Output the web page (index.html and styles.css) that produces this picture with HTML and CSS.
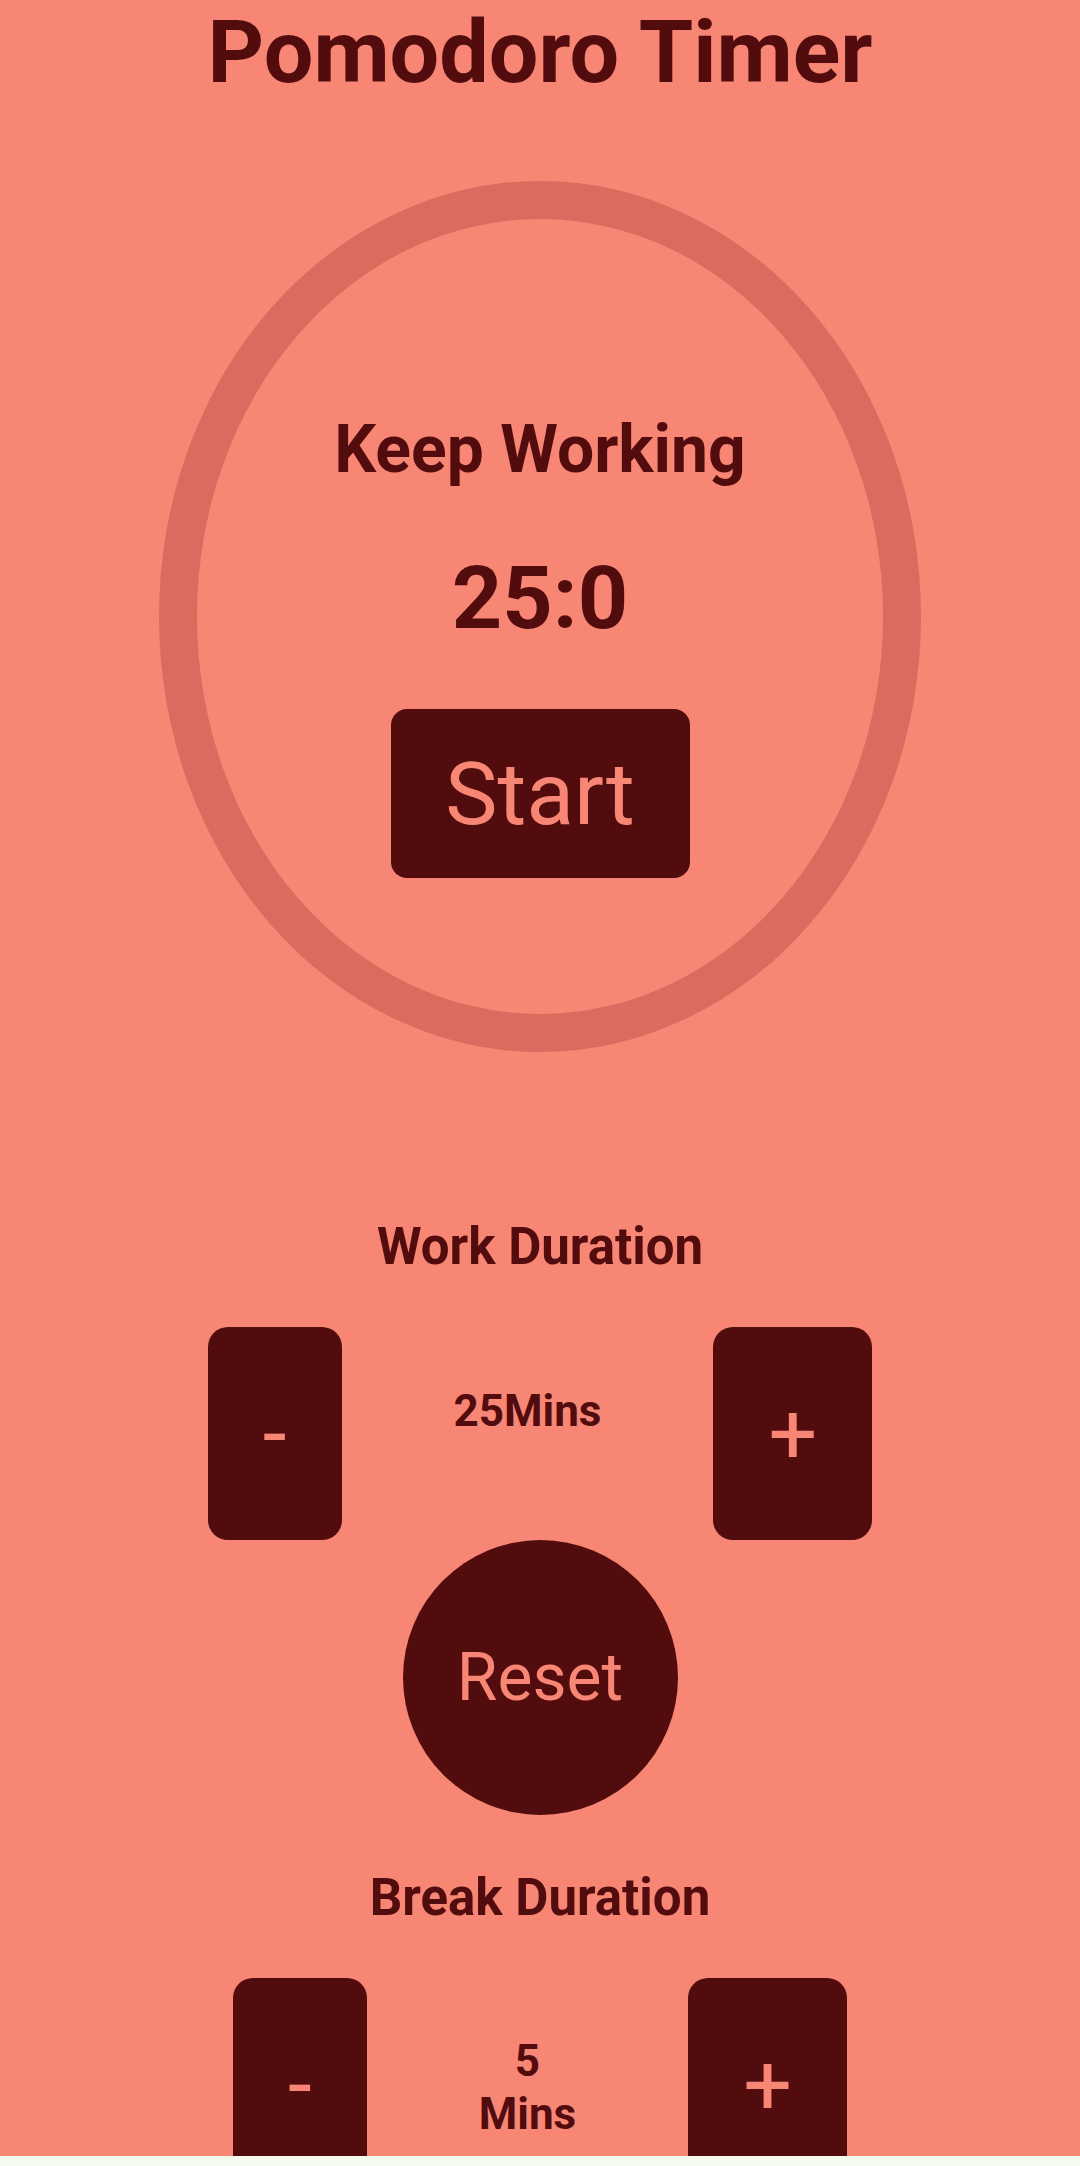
FILE: index.html
```html
<!DOCTYPE html>
<html lang="en">
<head>
<meta charset="utf-8">
<title>Pomodoro Timer</title>
<link rel="stylesheet" href="styles.css">
</head>
<body>
<div class="app">
  <h1 class="title">Pomodoro Timer</h1>
  <div class="ring">
    <div class="status">Keep Working</div>
    <div class="time">25:0</div>
    <button class="start">Start</button>
  </div>
  <div class="section-title work-title">Work Duration</div>
  <div class="stepper">
    <button class="step">-</button>
    <div class="value value-work">25Mins</div>
    <button class="step">+</button>
  </div>
  <button class="reset">Reset</button>
  <div class="section-title break-title">Break Duration</div>
  <div class="stepper">
    <button class="step">-</button>
    <div class="value value-break">5 Mins</div>
    <button class="step">+</button>
  </div>
</div>
</body>
</html>
```

FILE: styles.css
```css
* { box-sizing: border-box; }
html, body {
  margin: 0;
  padding: 0;
  background: #f4faee;
}
body {
  font-family: Roboto, "Liberation Sans", sans-serif;
  color: #520c0e;
}
.app {
  height: 2156px;
  overflow: hidden;
  background: #f88675;
  display: flex;
  flex-direction: column;
  align-items: center;
}
.title {
  margin: 8px 0 0;
  font-size: 88px;
  line-height: 88px;
  font-weight: 700;
}
.ring {
  margin-top: 85px;
  width: 762px;
  height: 871px;
  border: 38px solid #dc6b5f;
  border-radius: 50%;
  display: flex;
  flex-direction: column;
  align-items: center;
  padding-top: 198px;
  flex-shrink: 0;
}
.status {
  font-size: 66px;
  line-height: 66px;
  font-weight: 700;
}
.time {
  margin-top: 71px;
  font-size: 88px;
  line-height: 88px;
  font-weight: 700;
}
.start {
  margin-top: 67px;
  width: 299px;
  height: 169px;
  border: none;
  border-radius: 16px;
  background: #520c0e;
  color: #f88675;
  font-family: Roboto, "Liberation Sans", sans-serif;
  font-size: 88px;
  line-height: 88px;
  font-weight: 400;
  padding: 0;
}
.section-title {
  font-size: 51px;
  line-height: 51px;
  font-weight: 700;
}
.work-title { margin-top: 169px; }
.break-title { margin-top: 57px; }
.stepper {
  margin-top: 55px;
  display: flex;
  align-items: center;
  justify-content: center;
  gap: 112px;
  flex-shrink: 0;
}
.step {
  height: 213px;
  padding: 0 55px;
  border: none;
  border-radius: 20px;
  background: #520c0e;
  color: #f88675;
  font-family: Roboto, "Liberation Sans", sans-serif;
  font-size: 86px;
  line-height: 86px;
  font-weight: 400;
}
.value {
  font-size: 44px;
  line-height: 53px;
  font-weight: 700;
  text-align: center;
}
.value-work { margin-bottom: 44px; }
.value-break { width: min-content; margin-top: 6px; }
.reset {
  width: 275px;
  height: 275px;
  flex-shrink: 0;
  border: none;
  border-radius: 50%;
  background: #520c0e;
  color: #f88675;
  font-family: Roboto, "Liberation Sans", sans-serif;
  font-size: 66px;
  line-height: 66px;
  font-weight: 400;
  padding: 0;
}
```
